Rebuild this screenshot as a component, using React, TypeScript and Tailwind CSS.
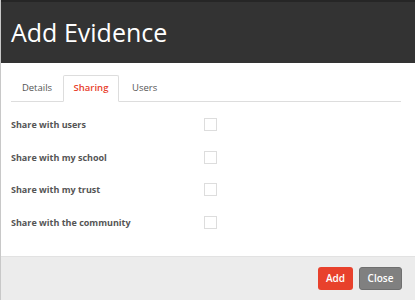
import React from "react";

export default function App() {
  const rows = [
    "Share with users",
    "Share with my school",
    "Share with my trust",
    "Share with the community",
  ];
  return (
    <div
      className="w-[415px] h-[300px] bg-white flex flex-col border-l border-[#c8c8c8] overflow-hidden"
      style={{ fontFamily: "'Open Sans', 'Noto Sans', sans-serif" }}
    >
      <div className="h-[63px] bg-[#333333] border-t-2 border-[#262626] flex items-center pl-[10px] shrink-0">
        <span className="text-white text-[25px] leading-none">Add Evidence</span>
      </div>
      <div className="flex-1 px-[10px] pt-[12px]">
        <div className="flex border-b border-[#dddddd] h-[27px] mr-[4px]">
          <div className="w-[52px] flex items-center justify-center text-[9.5px] text-[#555] mt-[1px]">Details</div>
          <div className="w-[56px] flex items-center justify-center text-[9.5px] font-semibold text-[#e8412c] bg-white border border-[#dddddd] border-b-white -mb-px rounded-t-[2px]">
            Sharing
          </div>
          <div className="pl-[13px] flex items-center text-[9.5px] text-[#555] mt-[1px]">Users</div>
        </div>
        <div className="flex flex-col pt-[16px] gap-[19.5px]">
          {rows.map((r) => (
            <div key={r} className="flex items-center h-[13px]">
              <span className="w-[193px] text-[9px] font-bold text-[#555] leading-none">{r}</span>
              <span className="w-[13px] h-[13px] border border-[#dddddd] bg-white" />
            </div>
          ))}
        </div>
      </div>
      <div className="h-[44px] bg-[#ececec] border-t border-[#e2e2e2] flex items-center justify-end gap-[6px] pr-[13px] shrink-0">
        <button className="h-[23px] w-[35px] rounded-[3px] bg-[#e8412c] text-white text-[10px] font-semibold">Add</button>
        <button className="h-[23px] w-[43px] rounded-[3px] bg-[#808080] text-white text-[10px] font-semibold border border-[#6f6f6f]">Close</button>
      </div>
    </div>
  );
}
